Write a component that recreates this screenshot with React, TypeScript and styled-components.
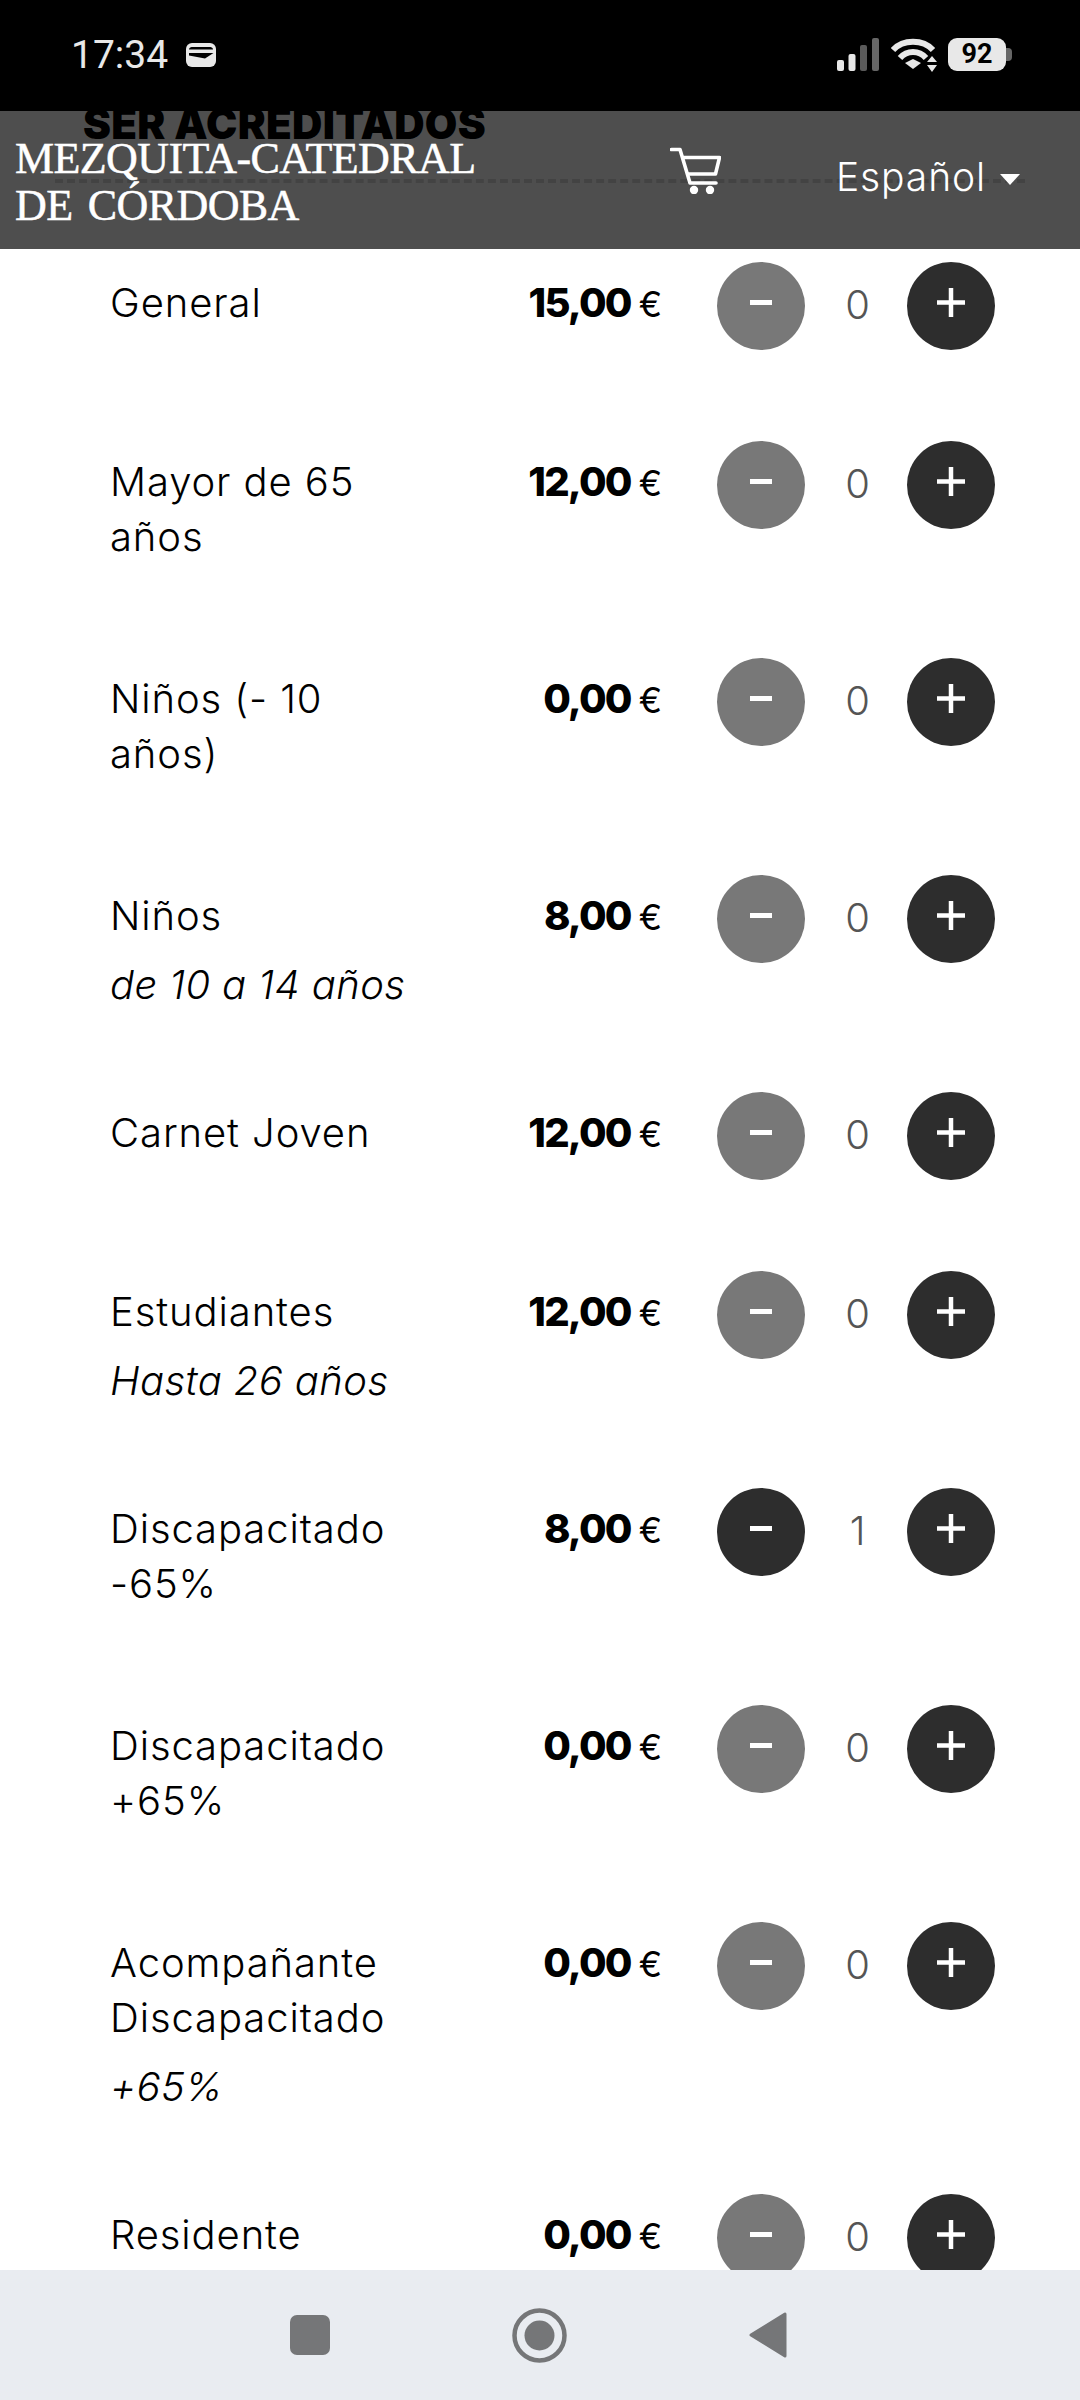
import styled, { createGlobalStyle } from "styled-components";

const GlobalStyle = createGlobalStyle`
  html, body {
    margin: 0;
    padding: 0;
    background: #fff;
  }
`;

interface TicketData {
  name: string[];
  note?: string;
  euros: string;
  count?: number;
}

const tickets: TicketData[] = [
  { name: ["General"], euros: "15,00" },
  { name: ["Mayor de 65", "años"], euros: "12,00" },
  { name: ["Niños (- 10", "años)"], euros: "0,00" },
  { name: ["Niños"], note: "de 10 a 14 años", euros: "8,00" },
  { name: ["Carnet Joven"], euros: "12,00" },
  { name: ["Estudiantes"], note: "Hasta 26 años", euros: "12,00" },
  { name: ["Discapacitado", "-65%"], euros: "8,00", count: 1 },
  { name: ["Discapacitado", "+65%"], euros: "0,00" },
  { name: ["Acompañante", "Discapacitado"], note: "+65%", euros: "0,00" },
  { name: ["Residente"], euros: "0,00" },
];

const MinusGlyph = () => (
  <svg width="22" height="5" viewBox="0 0 22 5">
    <rect width="22" height="5" fill="#fff" />
  </svg>
);

const PlusGlyph = () => (
  <svg width="28" height="29" viewBox="0 0 28 29">
    <path d="M0 14.5h28M14 0v29" stroke="#fff" strokeWidth="4.5" fill="none" />
  </svg>
);

const CartIcon = () => (
  <svg width="51" height="47" viewBox="0 0 51 47" fill="none" stroke="#fff" strokeWidth="3.6" strokeLinecap="round" strokeLinejoin="round">
    <path d="M1.5 2.5H10L20 36H46" />
    <path d="M13 10.5H49.5L45.5 27H18" />
    <circle cx="24" cy="43" r="2.4" fill="#fff" />
    <circle cx="40" cy="43" r="2.4" fill="#fff" />
  </svg>
);

const WalletIcon = () => (
  <svg width="30" height="24" viewBox="0 0 30 24">
    <rect width="30" height="24" rx="6" fill="#e8e8e8" />
    <path d="M3 6.500C3 4.500 5 4 7 4H23C25 4 27 4.500 27 6.500Z" fill="#000" />
    <path d="M3 10H27.500L19 15.500L3 12.500Z" fill="#000" />
  </svg>
);

const SignalIcon = () => (
  <svg width="42" height="33" viewBox="0 0 42 33">
    <rect x="0" y="22" width="7" height="11" rx="2" fill="#e8e8e8" />
    <rect x="11.500" y="16" width="7" height="17" rx="2" fill="#e8e8e8" />
    <rect x="23" y="7" width="7" height="26" rx="2" fill="#5a5a5a" />
    <rect x="35" y="0" width="7" height="33" rx="2" fill="#666" />
  </svg>
);

const WifiIcon = () => (
  <svg width="46" height="34" viewBox="0 0 46 34">
    <path d="M2 12C12 1 32 1 42 12" stroke="#e8e8e8" strokeWidth="6" fill="none" />
    <path d="M9 20C16 12 28 12 35 20" stroke="#e8e8e8" strokeWidth="6" fill="none" />
    <path d="M14 25L22 21L30 25L22 31Z" fill="#e8e8e8" />
    <path d="M36 24L41 18L46 24ZM36 27L46 27L41 34Z" fill="#e8e8e8" />
  </svg>
);

const SquareIcon = () => (
  <svg width="40" height="40" viewBox="0 0 40 40">
    <rect width="40" height="40" rx="7" fill="#757678" />
  </svg>
);

const CircleIcon = () => (
  <svg width="55" height="55" viewBox="0 0 55 55">
    <circle cx="27.500" cy="27.500" r="25" fill="none" stroke="#757678" strokeWidth="4.500" />
    <circle cx="27.500" cy="27.500" r="15" fill="#757678" />
  </svg>
);

const BackIcon = () => (
  <svg width="38" height="46" viewBox="0 0 38 46">
    <path d="M36 2V44L2 23Z" fill="#757678" stroke="#757678" strokeWidth="3" strokeLinejoin="round" />
  </svg>
);

const Ticket = ({ name, note, euros, count = 0 }: TicketData) => (
  <TicketRow>
    <TicketLabel>
      <TicketName>
        {name.map((line) => (
          <div key={line}>{line}</div>
        ))}
      </TicketName>
      {note && <TicketNote>{note}</TicketNote>}
    </TicketLabel>
    <Price>
      <Amount>{euros}</Amount>
      <Currency>€</Currency>
    </Price>
    <Stepper>
      <RoundButton $muted={count === 0}>
        <MinusGlyph />
      </RoundButton>
      <Count>{count}</Count>
      <RoundButton>
        <PlusGlyph />
      </RoundButton>
    </Stepper>
  </TicketRow>
);

export default function App() {
  return (
    <Screen>
      <GlobalStyle />
      <StatusBar>
        <Clock>17:34</Clock>
        <WalletIcon />
        <StatusRight>
          <SignalIcon />
          <WifiIcon />
          <Battery>
            <BatteryBody>92</BatteryBody>
            <BatteryNub />
          </Battery>
        </StatusRight>
      </StatusBar>
      <Viewport>
        <Header>
          <Logo>
            MEZQUITA-CATEDRAL
            <br />
            DE CÓRDOBA
          </Logo>
          <CartSlot>
            <CartIcon />
          </CartSlot>
          <Language>
            Español
            <Caret />
          </Language>
        </Header>
        <SectionTitle>SER ACREDITADOS</SectionTitle>
        <TicketList>
          {tickets.map((t) => (
            <Ticket key={t.name.join(" ") + t.euros} {...t} />
          ))}
        </TicketList>
      </Viewport>
      <NavBar>
        <SquareIcon />
        <CircleIcon />
        <BackIcon />
      </NavBar>
    </Screen>
  );
}

const Screen = styled.div`
  width: 1080px;
  height: 2400px;
  display: flex;
  flex-direction: column;
  overflow: hidden;
  background: #fff;
  font-family: "Inter", "Open Sans", sans-serif;
  color: #000;
`;

const StatusBar = styled.div`
  flex: 0 0 111px;
  display: flex;
  align-items: center;
  padding: 0 68px 2px 71px;
  background: #000;
  box-sizing: border-box;
`;

const Clock = styled.div`
  font-family: "Roboto", sans-serif;
  font-size: 39px;
  color: #e8e8e8;
  margin-right: 19px;
  width: 96px;
`;

const StatusRight = styled.div`
  margin-left: auto;
  display: flex;
  align-items: center;
  gap: 12px;
`;

const Battery = styled.div`
  display: flex;
  align-items: center;
  margin-left: -1px;
`;

const BatteryBody = styled.div`
  width: 58px;
  height: 33px;
  border-radius: 9px;
  background: #e8e8e8;
  color: #000;
  font-family: "Roboto", sans-serif;
  font-size: 27px;
  font-weight: 700;
  line-height: 33px;
  text-align: center;
`;

const BatteryNub = styled.div`
  width: 6px;
  height: 13px;
  border-radius: 0 4px 4px 0;
  background: #666;
`;

const Viewport = styled.div`
  flex: 1;
  position: relative;
  overflow: hidden;
`;

const Header = styled.div`
  position: absolute;
  top: 0;
  left: 0;
  right: 0;
  height: 138px;
  display: flex;
  align-items: center;
  padding: 0 60px 0 15px;
  box-sizing: border-box;
  background: rgba(0, 0, 0, 0.695);
  z-index: 2;
`;

const Logo = styled.div`
  font-family: "Liberation Serif", serif;
  font-size: 44px;
  line-height: 47px;
  color: #fff;
  white-space: nowrap;
  letter-spacing: -0.6px;
  word-spacing: 5px;
  -webkit-text-stroke: 0.5px #fff;
  margin-top: 4px;
`;

const CartSlot = styled.div`
  margin-left: auto;
  margin-bottom: 20px;
  height: 47px;
`;

const Language = styled.div`
  margin-left: 115px;
  display: flex;
  align-items: center;
  color: #fff;
  font-size: 39px;
  font-weight: 300;
  letter-spacing: 0.9px;
  margin-bottom: 8px;
`;

const Caret = styled.span`
  margin-left: 14px;
  margin-top: 6px;
  border-left: 10px solid transparent;
  border-right: 10px solid transparent;
  border-top: 11px solid #fff;
`;

const SectionTitle = styled.div`
  margin: -12px 55px 0;
  padding: 0 0 30px 28px;
  border-bottom: 4px dashed #dcdcdc;
  font-size: 42px;
  font-weight: 900;
  letter-spacing: 0.3px;
  line-height: 50px;
  white-space: nowrap;
`;

const TicketList = styled.div`
  margin-top: 79px;
  display: flex;
  flex-direction: column;
  gap: 91px;
`;

const TicketRow = styled.div`
  display: flex;
  align-items: flex-start;
  min-height: 88px;
  padding: 0 85px 0 110px;
`;

const TicketLabel = styled.div`
  flex: 1;
  margin: 13px 0 -11px;
  font-size: 40px;
  font-weight: 300;
  letter-spacing: 0.9px;
  line-height: 55px;
`;

const TicketName = styled.div`
  margin-bottom: 14px;
`;

const TicketNote = styled.div`
  font-style: italic;
  letter-spacing: 0.4px;
`;

const Price = styled.div`
  margin: 13px 55px 0 0;
  display: flex;
  align-items: baseline;
  gap: 8px;
  line-height: 55px;
  white-space: nowrap;
`;

const Amount = styled.span`
  font-size: 40px;
  font-weight: 800;
  letter-spacing: -1.8px;
`;

const Currency = styled.span`
  font-size: 35px;
  font-weight: 400;
`;

const Stepper = styled.div`
  flex: 0 0 278px;
  display: flex;
  align-items: center;
  justify-content: space-between;
`;

const RoundButton = styled.div<{ $muted?: boolean }>`
  width: 88px;
  height: 88px;
  border-radius: 50%;
  display: flex;
  align-items: center;
  justify-content: center;
  padding-bottom: 8px;
  box-sizing: border-box;
  background: ${(props) => (props.$muted ? "#787878" : "#2d2d2d")};
`;

const Count = styled.div`
  margin: 0 0 3px 3px;
  font-size: 40px;
  font-weight: 300;
  color: #555;
`;

const NavBar = styled.div`
  flex: 0 0 130px;
  display: flex;
  align-items: center;
  gap: 182px;
  padding-left: 290px;
  background: #e9ecf1;
  z-index: 3;
`;
